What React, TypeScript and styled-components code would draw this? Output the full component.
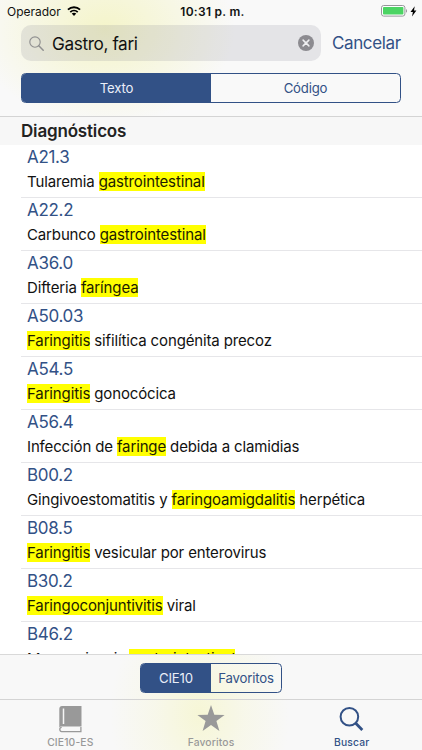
import React from "react";
import styled, { createGlobalStyle } from "styled-components";

const BLUE = "#325186";

const GlobalStyle = createGlobalStyle`
  * { box-sizing: border-box; }
  html, body { margin: 0; padding: 0; }
  body { font-family: Inter, "Liberation Sans", sans-serif; color: #111; background: #fff; }
  button { font: inherit; letter-spacing: inherit; margin: 0; }
`;

const Screen = styled.div`
  width: 422px;
  height: 750px;
  overflow: hidden;
  display: flex;
  flex-direction: column;
  background: #fff;
`;

const TopArea = styled.header`
  flex: none;
  height: 117px;
  display: flex;
  flex-direction: column;
  border-bottom: 1px solid #d4d4d4;
  background:
    radial-gradient(ellipse 130px 95px at 105px 30px, rgba(244, 244, 196, 0.9) 0%, rgba(245, 245, 208, 0.65) 45%, rgba(249, 249, 249, 0) 100%),
    #f9f9f9;
`;

const StatusBar = styled.div`
  height: 24px;
  display: grid;
  grid-template-columns: 1fr auto 1fr;
  align-items: center;
  padding: 0 4px 2px 7px;
  font-size: 12px;
`;

const Carrier = styled.div`
  display: flex;
  align-items: center;
  gap: 6px;
`;

const Clock = styled.div`
  font-weight: 600;
  letter-spacing: 0.28px;
`;

const Power = styled.div`
  display: flex;
  justify-content: flex-end;
  align-items: center;
  gap: 2px;
  padding-right: 1px;
`;

const SearchRow = styled.div`
  display: flex;
  align-items: center;
  padding: 0 0 0 21px;
  height: 38px;
`;

const SearchField = styled.div`
  flex: none;
  width: 300px;
  height: 36px;
  border-radius: 10px;
  background: rgba(120, 118, 135, 0.16);
  display: flex;
  align-items: center;
  padding: 0 7px 0 8px;
`;

const Query = styled.span`
  flex: 1;
  margin-left: 8px;
  font-size: 17.2px;
  letter-spacing: -0.38px;
`;

const Cancel = styled.button`
  border: 0;
  background: none;
  padding: 0;
  margin-left: 11px;
  color: ${BLUE};
  font-size: 17px;
  letter-spacing: -0.38px;
  white-space: nowrap;
`;

const Segmented = styled.div<{ $width: number }>`
  width: ${(p) => p.$width}px;
  height: 30px;
  display: flex;
  border: 1px solid ${BLUE};
  border-radius: 4.5px;
  overflow: hidden;
  font-size: 13.2px;
  letter-spacing: -0.18px;
`;

const Segment = styled.button<{ $active?: boolean }>`
  flex: 1;
  border: 0;
  padding: 0;
  background: ${(p) => (p.$active ? BLUE : "transparent")};
  color: ${(p) => (p.$active ? "#e9eef8" : BLUE)};
`;

const ScopeRow = styled.div`
  display: flex;
  justify-content: center;
  margin-top: 11px;
`;

const SectionTitle = styled.h2`
  flex: none;
  height: 28px;
  margin: 0;
  padding: 4px 0 0 21px;
  background: #f7f7f7;
  font-size: 17px;
  line-height: 21px;
  letter-spacing: -0.17px;
  font-weight: 600;
  color: #222;
`;

const List = styled.ul`
  flex: 1;
  min-height: 0;
  overflow: hidden;
  margin: 0;
  padding: 0 0 0 21px;
  list-style: none;
`;

const Row = styled.li`
  height: 53px;
  padding: 2px 0 0 6px;
  border-bottom: 1px solid #e6e6e9;
`;

const Code = styled.div`
  height: 25px;
  line-height: 21px;
  font-size: 17px;
  letter-spacing: -0.3px;
  color: ${BLUE};
`;

const Description = styled.div`
  height: 20px;
  line-height: 20px;
  font-size: 15px;
  letter-spacing: -0.14px;
  white-space: nowrap;
`;

const Mark = styled.mark`
  background: #ffff00;
  color: #1c1c00;
`;

const BottomArea = styled.footer`
  flex: none;
  height: 96px;
  background:
    radial-gradient(ellipse 90px 120px at 200px 60px, rgba(246, 246, 212, 0.95) 0%, rgba(247, 247, 225, 0.6) 50%, rgba(248, 248, 248, 0) 100%),
    #f8f8f8;
`;

const Toolbar = styled.div`
  height: 45px;
  border-top: 1px solid #d9d9d9;
  display: flex;
  justify-content: center;
  padding-top: 8px;
`;

const TabBar = styled.nav`
  height: 51px;
  border-top: 1px solid #d4d4d4;
  display: grid;
  grid-template-columns: repeat(3, 1fr);
`;

const Tab = styled.div<{ $active?: boolean }>`
  display: flex;
  flex-direction: column;
  align-items: center;
  color: ${(p) => (p.$active ? BLUE : "#999")};
  font-size: 10.3px;
  font-weight: 500;
  line-height: 13px;
  letter-spacing: 0.15px;
  svg { display: block; height: 31px; margin: 4px 0 1px; }
`;

const WifiIcon = () => (
  <svg width="14" height="10.3" viewBox="0 0 15 11" fill="none" stroke="#000" strokeWidth="2">
    <path d="M1 3.9C4.7.5 10.3.5 14 3.9" />
    <path d="M3.5 6.5C5.8 4.4 9.2 4.4 11.5 6.5" />
    <path d="M7.5 10.6 5.1 8.1C6.5 6.9 8.5 6.9 9.9 8.1Z" fill="#000" stroke="none" />
  </svg>
);

const BatteryIcon = () => (
  <svg width="27" height="12" viewBox="0 0 27 12">
    <rect x="0.5" y="0.5" width="23.4" height="10.6" rx="2.2" fill="#fff" stroke="#96969a" />
    <rect x="2" y="2" width="20.4" height="7.6" rx="0.8" fill="#4bd463" />
    <path d="M25 4v3.8c1.4-.6 1.4-3.2 0-3.8z" fill="#96969a" />
  </svg>
);

const BoltIcon = () => (
  <svg width="7" height="11" viewBox="0 0 7 11">
    <path d="M4.7.2.5 6h2.4L2 10.6 6.4 4.6H4z" fill="#000" />
  </svg>
);

const FieldSearchIcon = () => (
  <svg width="15" height="15" viewBox="0 0 15 15" fill="none" stroke="#909090" strokeWidth="1.15" strokeLinecap="round">
    <circle cx="6" cy="6" r="5.2" />
    <path d="M9.8 9.8 14.2 14.2" strokeWidth="1.5" />
  </svg>
);

const ClearIcon = () => (
  <svg width="16" height="16" viewBox="0 0 16 16">
    <circle cx="8" cy="8" r="8" fill="#8c8b90" />
    <path d="M5.1 5.1l5.8 5.8M10.9 5.1l-5.8 5.8" stroke="#efeff1" strokeWidth="1.5" strokeLinecap="round" />
  </svg>
);

const BookIcon = () => (
  <svg width="24" height="31" viewBox="0 0 24 31">
    <path d="M4 2H23.5V22.5H3.7C2.5 22.5 1.8 23 1.3 23.6V4.8C1.3 3.2 2.4 2 4 2z" fill="#999" />
    <path d="M5.5 4.5V20" stroke="#f5f5f5" strokeWidth="1.5" />
    <path d="M22.9 23V27.6H3.7C2.3 27.6 1.8 26.4 1.8 25.3S2.4 23.3 3.7 23.3" fill="none" stroke="#999" strokeWidth="1.3" />
  </svg>
);

const StarIcon = () => (
  <svg width="30" height="31" viewBox="0 0 30 31">
    <path d="M15 1 18.3 10.8 28.6 10.9 20.4 17.1 23.4 27 15 21.1 6.6 27 9.6 17.1 1.4 10.9 11.7 10.8z" fill="#999" />
  </svg>
);

const TabSearchIcon = () => (
  <svg width="26" height="31" viewBox="0 0 26 31" fill="none" stroke={BLUE}>
    <circle cx="10.4" cy="12.7" r="8.8" strokeWidth="2" />
    <path d="M16.5 19 23.3 26" strokeWidth="2.8" />
  </svg>
);

const diagnoses = [
  { code: "A21.3", before: "Tularemia ", match: "gastrointestinal", after: "" },
  { code: "A22.2", before: "Carbunco ", match: "gastrointestinal", after: "" },
  { code: "A36.0", before: "Difteria ", match: "faríngea", after: "" },
  { code: "A50.03", before: "", match: "Faringitis", after: " sifilítica congénita precoz" },
  { code: "A54.5", before: "", match: "Faringitis", after: " gonocócica" },
  { code: "A56.4", before: "Infección de ", match: "faringe", after: " debida a clamidias" },
  { code: "B00.2", before: "Gingivoestomatitis y ", match: "faringoamigdalitis", after: " herpética" },
  { code: "B08.5", before: "", match: "Faringitis", after: " vesicular por enterovirus" },
  { code: "B30.2", before: "", match: "Faringoconjuntivitis", after: " viral" },
  { code: "B46.2", before: "Mucormicosis ", match: "gastrointestinal", after: "" },
];

export default function App() {
  return (
    <Screen>
      <GlobalStyle />
      <TopArea>
        <StatusBar>
          <Carrier>Operador <WifiIcon /></Carrier>
          <Clock>10:31 p. m.</Clock>
          <Power><BatteryIcon /><BoltIcon /></Power>
        </StatusBar>
        <SearchRow>
          <SearchField>
            <FieldSearchIcon />
            <Query>Gastro, fari</Query>
            <ClearIcon />
          </SearchField>
          <Cancel>Cancelar</Cancel>
        </SearchRow>
        <ScopeRow>
          <Segmented $width={380}>
            <Segment $active>Texto</Segment>
            <Segment>Código</Segment>
          </Segmented>
        </ScopeRow>
      </TopArea>
      <SectionTitle>Diagnósticos</SectionTitle>
      <List>
        {diagnoses.map((d) => (
          <Row key={d.code}>
            <Code>{d.code}</Code>
            <Description>
              {d.before}<Mark>{d.match}</Mark>{d.after}
            </Description>
          </Row>
        ))}
      </List>
      <BottomArea>
        <Toolbar>
          <Segmented $width={142}>
            <Segment $active>CIE10</Segment>
            <Segment>Favoritos</Segment>
          </Segmented>
        </Toolbar>
        <TabBar>
          <Tab><BookIcon />CIE10-ES</Tab>
          <Tab><StarIcon />Favoritos</Tab>
          <Tab $active><TabSearchIcon />Buscar</Tab>
        </TabBar>
      </BottomArea>
    </Screen>
  );
}
